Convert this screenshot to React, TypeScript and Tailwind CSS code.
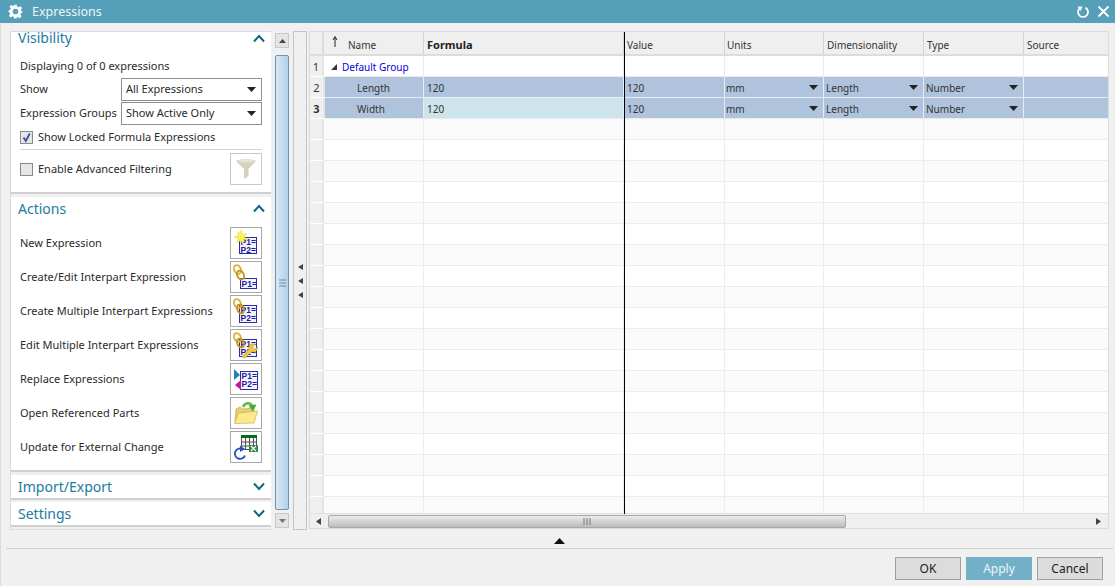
import React from "react";

const font = { fontFamily: '"Noto Sans", "Liberation Sans", sans-serif' };

function Chevron({ up }: { up?: boolean }) {
  return (
    <svg width="12" height="9" viewBox="0 0 12 9" className="shrink-0">
      <path d={up ? "M1 7.5 L6 2 L11 7.5" : "M1 1.5 L6 7 L11 1.5"} fill="none" stroke="#0f6a85" strokeWidth="2" />
    </svg>
  );
}

function Caret() {
  return (
    <svg width="9" height="5" viewBox="0 0 9 5" className="shrink-0">
      <path d="M0 0 H9 L4.5 5 Z" fill="#222" />
    </svg>
  );
}

function Rings() {
  return (
    <g fill="none" strokeWidth="1.9">
      <ellipse cx="6.5" cy="7.5" rx="3.3" ry="4.6" transform="rotate(-25 6.5 7.5)" stroke="#dcb23a" />
      <ellipse cx="9.5" cy="13" rx="3.3" ry="4.6" transform="rotate(-25 9.5 13)" stroke="#c4960f" />
    </g>
  );
}

function PBox({ x, y, w, h, lines }: { x: number; y: number; w: number; h: number; lines: string[] }) {
  return (
    <g>
      <rect x={x + 0.5} y={y + 0.5} width={w - 1} height={h - 1} fill="#f4f4ff" stroke="#2c2ca8" />
      {lines.map((l, i) => (
        <text
          key={l}
          x={x + 1.5}
          y={y + (lines.length === 1 ? h - 2 : 7.5 + i * 8)}
          fontSize="8.5"
          fontWeight="700"
          fill="#1c1c9c"
          fontFamily="Liberation Sans, sans-serif"
        >
          {l}
        </text>
      ))}
    </g>
  );
}

function IconNew() {
  return (
    <svg width="30" height="30" viewBox="0 0 30 30">
      <PBox x={8} y={9} w={18} h={17} lines={["P1=", "P2="]} />
      <path d="M10 2 L11.5 6.5 L16 5 L13 9 L17 11.5 L12.5 11.5 L12 16 L9.5 12.5 L5.5 15 L7.5 10.5 L3 9 L7.5 7.5 L6.5 3.5 L9 6 Z" fill="#fbf25a" stroke="#e6d92c" strokeWidth="0.5" />
    </svg>
  );
}

function IconLink() {
  return (
    <svg width="30" height="30" viewBox="0 0 30 30">
      <PBox x={9} y={16} w={17} h={11} lines={["P1="]} />
      <Rings />
    </svg>
  );
}

function IconLinkMulti() {
  return (
    <svg width="30" height="30" viewBox="0 0 30 30">
      <PBox x={8} y={9} w={18} h={18} lines={["P1=", "P2="]} />
      <Rings />
    </svg>
  );
}

function IconLinkEdit() {
  return (
    <svg width="30" height="30" viewBox="0 0 30 30">
      <PBox x={8} y={9} w={18} h={18} lines={["P1=", "P2="]} />
      <Rings />
      <path d="M11 27 L18 19 C17 15 21 13 24.5 14 L21.5 17 L23.5 19.5 L26.5 17 C27 20.5 24 23 20.5 21.5 L14 28 Z" fill="#f0c840" stroke="#c79a18" strokeWidth="0.6" />
    </svg>
  );
}

function IconReplace() {
  return (
    <svg width="30" height="30" viewBox="0 0 30 30">
      <PBox x={9} y={7} w={18} h={19} lines={["P1=", "P2="]} />
      <path d="M3 5 L9 11 L3 16 Z" fill="#1c84c4" />
      <path d="M10 16 L10 26 L4 21 Z" fill="#c0189c" />
    </svg>
  );
}

function IconFolder() {
  return (
    <svg width="30" height="30" viewBox="0 0 30 30">
      <path d="M5 11 L9 9 L12 11 L23 10 L22 24 L4 25 Z" fill="#e8cf6a" stroke="#b89c40" strokeWidth="0.6" />
      <path d="M3.5 25.5 L7.5 15 L26.5 13 L23 25 Z" fill="#fbe98e" stroke="#c2a648" strokeWidth="0.6" />
      <path d="M12 9 C14 4.5 19 4 21 7.5" fill="none" stroke="#5cb848" strokeWidth="2.6" />
      <path d="M17.5 7.5 L25.5 6.5 L22 13.5 Z" fill="#4aa838" />
    </svg>
  );
}

function IconExcel() {
  return (
    <svg width="30" height="30" viewBox="0 0 30 30">
      <rect x="10.5" y="3.5" width="15" height="14" fill="#f4f4f4" stroke="#555" />
      <rect x="10" y="3" width="16" height="3" fill="#0a6a1c" />
      <path d="M10.5 10H25.5M10.5 14H25.5M14.5 6V18M18.5 6V18M22.5 6V18" stroke="#555" strokeWidth="1" />
      <path d="M18 13 H27 V20 H18 Z" fill="#2e8a3c" />
      <path d="M20 14 L25 19 M25 14 L20 19" stroke="#fff" strokeWidth="1.2" />
      <path d="M14 23.5 A5.2 5.2 0 1 1 9 16.5" fill="none" stroke="#2d50c0" strokeWidth="1.9" />
      <path d="M9 13.5 L14 17 L9 20 Z" fill="#2d50c0" />
    </svg>
  );
}

function Check({ checked }: { checked?: boolean }) {
  return (
    <span className="w-[13px] h-[13px] shrink-0 border border-[#8a8a8a] bg-[#e6e6e6] flex items-center justify-center">
      {checked ? (
        <svg width="11" height="11" viewBox="0 0 11 11">
          <path d="M2.5 5.5 L4.8 9 L8.8 1.5" fill="none" stroke="#3c4fa8" strokeWidth="1.8" />
        </svg>
      ) : null}
    </span>
  );
}

function Select({ value }: { value: string }) {
  return (
    <div className="w-[141px] h-[23px] border border-[#8e8e8e] bg-white flex items-center justify-between pl-[4px] pr-[5px] text-[11px]">
      <span className="pb-[2px]">{value}</span>
      <Caret />
    </div>
  );
}

function SectionHead({ title, up, h = "h-[23px]" }: { title: string; up?: boolean; h?: string }) {
  return (
    <div className={`${h} flex items-center justify-between pl-[7px] pr-[6px] text-[14px] text-[#1b7c9e]`}>
      <span>{title}</span>
      <Chevron up={up} />
    </div>
  );
}

function ActionRow({ label, icon }: { label: string; icon: React.ReactNode }) {
  return (
    <div className="h-[32px] flex items-center justify-between">
      <span className="whitespace-nowrap pb-[2px]">{label}</span>
      <span className="w-[32px] h-[32px] border border-[#a8a8a8] bg-white flex items-center justify-center">{icon}</span>
    </div>
  );
}

const cols = ["w-[100px]", "w-[200px]", "w-[101px]", "w-[99px]", "w-[100px]", "w-[100px]", "w-[100px]", "flex-1"];
const headers = ["Name", "Formula", "Value", "Units", "Dimensionality", "Type", "Source"];

function HeaderRow() {
  return (
    <div className="h-[24px] flex bg-[#efefef] border-b-2 border-[#dcdcdc] shrink-0">
      <div className="w-[14px] shrink-0 border-r-2 border-[#dcdcdc]" />
      {headers.map((h, i) => (
        <div key={h} className={`${cols[i]} ${i === 6 ? "" : "shrink-0 border-r border-[#d4d4d4]"} flex items-center pt-[3px] ${i === 0 ? "" : i === 3 ? "pl-[2px]" : "pl-[3px]"} ${i === 1 ? "font-bold text-[#222] text-[11px]" : ""}`}>
          {i === 0 ? (
            <span className="flex items-center w-full">
              <svg width="24" height="14" viewBox="0 0 24 14" className="mb-[5px] shrink-0">
                <path d="M11 12 V3 M9 5 L11 1.5 L13 5" fill="none" stroke="#222" strokeWidth="1" />
              </svg>
              <span>{h}</span>
            </span>
          ) : (
            h
          )}
        </div>
      ))}
    </div>
  );
}

function DataRow({ n, name, formulaActive }: { n: number; name: string; formulaActive?: boolean }) {
  const cell = "shrink-0 h-full flex items-center justify-between pt-[1px] border-r border-[#e6ecf4]";
  return (
    <div className="h-[21px] flex bg-[#afc3dc] border-b border-[#e6ecf4] shrink-0">
      <div className={`w-[15px] shrink-0 bg-[#efefef] border-r-2 border-[#e4e4e4] flex items-center justify-center text-[11px] shadow-[0_1px_0_#ffffff] ${n === 3 ? "font-bold" : ""}`}>{n}</div>
      <div className={`w-[99px] ${cell} pl-[32px]`}>{name}</div>
      <div className={`w-[200px] ${cell} pl-[3px] ${formulaActive ? "bg-[#cde4ea]" : ""}`}>120</div>
      <div className={`w-[101px] ${cell} pl-[3px]`}>120</div>
      <div className={`w-[99px] ${cell} pl-[1px] pr-[5px]`}>
        <span>mm</span>
        <Caret />
      </div>
      <div className={`w-[100px] ${cell} pl-[2px] pr-[5px]`}>
        <span>Length</span>
        <Caret />
      </div>
      <div className={`w-[100px] ${cell} pl-[2px] pr-[5px]`}>
        <span>Number</span>
        <Caret />
      </div>
      <div className="flex-1" />
    </div>
  );
}

function EmptyRow({ n, children }: { n: number; children?: React.ReactNode }) {
  return (
    <div className={`h-[21px] flex shrink-0 border-b border-[#ececec] ${n % 2 === 0 ? "bg-[#fafafa]" : "bg-white"}`}>
      <div className="w-[14px] shrink-0 bg-[#efefef] border-r-2 border-[#e4e4e4] flex items-center justify-center text-[11px] shadow-[0_1px_0_#ffffff]">{children ? n : ""}</div>
      <div className="w-[100px] shrink-0 border-r border-[#ececec] flex items-center pl-[6px] pt-[1px] whitespace-nowrap">{children}</div>
      <div className="w-[200px] shrink-0 border-r border-[#ececec]" />
      <div className="w-[101px] shrink-0 border-r border-[#ececec]" />
      <div className="w-[99px] shrink-0 border-r border-[#ececec]" />
      <div className="w-[100px] shrink-0 border-r border-[#ececec]" />
      <div className="w-[100px] shrink-0 border-r border-[#ececec]" />
      <div className="flex-1" />
    </div>
  );
}

function Button({ label, primary, ml }: { label: string; primary?: boolean; ml?: string }) {
  return (
    <div
      className={`w-[66px] h-[23px] flex items-center justify-center text-[12px] ${ml ?? ""} ${
        primary ? "bg-[#72b0c8] text-[#eef6fa]" : "bg-[#dcdcdc] border border-[#a0a0a0] text-[#222]"
      }`}
    >
      {label}
    </div>
  );
}

export default function App() {
  const empties = Array.from({ length: 19 }, (_, i) => i + 4);
  return (
    <div style={font} className="w-[1115px] h-[586px] bg-[#f0f0f0] shadow-[inset_1px_0_0_#dcdcdc] flex flex-col overflow-hidden text-[11px] text-[#2a2a2a] leading-none">
      {/* title bar */}
      <div className="h-[23px] shrink-0 bg-[#559fb9] flex items-center pl-[8px] pr-[5px] text-white">
        <svg width="15" height="15" viewBox="0 0 24 24" className="shrink-0">
          <path
            fillRule="evenodd"
            fill="#fff"
            d="M10 1 H14 L14.6 4.3 L16.9 5.3 L19.7 3.4 L22.6 6.3 L20.7 9.1 L21.7 11.4 L23 12 V14 L20.7 14.6 L19.7 16.9 L21.6 19.7 L18.7 22.6 L15.9 20.7 L14 21.5 L14 23 H10 L9.4 20.7 L7.1 19.7 L4.3 21.6 L1.4 18.7 L3.3 15.9 L2.3 13.6 L1 13 V10 L3.3 9.4 L4.3 7.1 L2.4 4.3 L5.3 1.4 L8.1 3.3 L9.4 2.3 Z M12 7.5 A4.5 4.5 0 1 0 12 16.5 A4.5 4.5 0 1 0 12 7.5 Z"
          />
        </svg>
        <span className="ml-[9px] pt-[2px] text-[12.5px] text-[#eef6fa]">Expressions</span>
        <span className="ml-auto flex items-center gap-[7px]">
          <svg width="14" height="14" viewBox="0 0 14 14">
            <path d="M4 3 A5 5 0 1 0 9.5 2.6" fill="none" stroke="#fff" strokeWidth="1.8" />
            <path d="M1.5 1.5 L6.5 1.5 L4.5 6 Z" fill="#fff" />
          </svg>
          <svg width="13" height="13" viewBox="0 0 13 13">
            <path d="M1.5 1.5 L11.5 11.5 M11.5 1.5 L1.5 11.5" stroke="#fff" strokeWidth="1.9" />
          </svg>
        </span>
      </div>

      {/* main */}
      <div className="h-[507px] shrink-0 flex pt-[8px] pl-[10px]">
        {/* left column */}
        <div className="w-[261px] h-[499px] shrink-0 border border-[#dcdcdc] border-r-0 flex flex-col">
          <section className="h-[162px] shrink-0 bg-white border-b-2 border-[#cfcfcf] flex flex-col">
            <SectionHead title="Visibility" up h="h-[12px]" />
            <div className="px-[9px] flex flex-col">
              <div className="mt-[14px] h-[14px] flex items-center whitespace-nowrap">Displaying 0 of 0 expressions</div>
              <div className="flex items-center justify-between mt-[6px]">
                <span className="pb-[2px]">Show</span>
                <Select value="All Expressions" />
              </div>
              <div className="flex items-center justify-between mt-[1px]">
                <span className="whitespace-nowrap pb-[2px]">Expression Groups</span>
                <Select value="Show Active Only" />
              </div>
              <label className="flex items-center gap-[5px] mt-[6px]">
                <Check checked />
                <span className="whitespace-nowrap pb-[2px]">Show Locked Formula Expressions</span>
              </label>
              <div className="border-t border-[#d4d4d4] mt-[5px]" />
              <div className="flex items-center justify-between mt-[3px]">
                <label className="flex items-center gap-[5px]">
                  <Check />
                  <span className="whitespace-nowrap pb-[2px]">Enable Advanced Filtering</span>
                </label>
                <span className="w-[32px] h-[32px] border border-[#c8c8c8] bg-white flex items-center justify-center">
                  <svg width="22" height="24" viewBox="0 0 22 24">
                    <path d="M1 4 C4 1.5 18 1.5 21 4 L13.5 12 V19 L9 22 V12 Z" fill="#d6d0bf" />
                    <ellipse cx="11" cy="4" rx="8" ry="1.4" fill="#e6e2d6" />
                  </svg>
                </span>
              </div>
            </div>
          </section>
          <section className="h-[275px] mt-[3px] shrink-0 bg-white border-b-2 border-[#cfcfcf] flex flex-col">
            <SectionHead title="Actions" up />
            <div className="px-[9px] mt-[7px] flex flex-col gap-[2px]">
              <ActionRow label="New Expression" icon={<IconNew />} />
              <ActionRow label="Create/Edit Interpart Expression" icon={<IconLink />} />
              <ActionRow label="Create Multiple Interpart Expressions" icon={<IconLinkMulti />} />
              <ActionRow label="Edit Multiple Interpart Expressions" icon={<IconLinkEdit />} />
              <ActionRow label="Replace Expressions" icon={<IconReplace />} />
              <ActionRow label="Open Referenced Parts" icon={<IconFolder />} />
              <ActionRow label="Update for External Change" icon={<IconExcel />} />
            </div>
          </section>
          <section className="h-[25px] mt-[3px] shrink-0 bg-white border-b-2 border-[#cfcfcf]">
            <SectionHead title="Import/Export" />
          </section>
          <section className="h-[25px] mt-[2px] shrink-0 bg-white border-b-2 border-[#cfcfcf]">
            <SectionHead title="Settings" />
          </section>
        </div>

        {/* vertical scrollbar */}
        <div className="w-[14px] ml-[4px] h-[496px] mt-[2px] shrink-0 flex flex-col">
          <div className="h-[15px] shrink-0 bg-[#e4e4e4] border border-[#c8c8c8] flex items-center justify-center">
            <svg width="7" height="4" viewBox="0 0 7 4">
              <path d="M0 4 L3.5 0 L7 4 Z" fill="#444" />
            </svg>
          </div>
          <div className="mt-[7px] h-[455px] shrink-0 rounded-[2px] border border-[#6f93b3] bg-gradient-to-r from-[#d8e8f5] to-[#b2d1e8] flex items-center justify-center">
            <svg width="9" height="8" viewBox="0 0 9 8">
              <path d="M1 1 H8 M1 4 H8 M1 7 H8" stroke="#6f8ca6" strokeWidth="1" />
            </svg>
          </div>
          <div className="mt-[3px] h-[15px] shrink-0 bg-[#e4e4e4] border border-[#c8c8c8] flex items-center justify-center">
            <svg width="7" height="4" viewBox="0 0 7 4">
              <path d="M0 0 L3.5 4 L7 0 Z" fill="#777" />
            </svg>
          </div>
        </div>

        {/* splitter */}
        <div className="w-[14px] ml-[4px] h-[499px] shrink-0 border border-[#c4c4c4] flex flex-col items-center justify-center gap-[8px] pt-[1px] pb-[1px]">
          {[0, 1, 2].map((k) => (
            <svg key={k} width="5" height="6" viewBox="0 0 5 6">
              <path d="M5 0 V6 L0 3 Z" fill="#444" />
            </svg>
          ))}
        </div>

        {/* table */}
        <div className="relative w-[800px] h-[498px] ml-[2px] shrink-0 border border-[#dcdcdc] flex flex-col overflow-hidden text-[10px] text-[#333]">
          <HeaderRow />
          <EmptyRow n={1}>
            <svg width="8" height="8" viewBox="0 0 8 8" className="mr-[4px] shrink-0">
              <path d="M7 1 V7 H1 Z" fill="#333" />
            </svg>
            <span className="text-[#0000e0]">Default Group</span>
          </EmptyRow>
          <DataRow n={2} name="Length" />
          <DataRow n={3} name="Width" formulaActive />
          <div className="flex-1 min-h-0 overflow-hidden flex flex-col">
            {empties.map((n) => (
              <EmptyRow key={n} n={n} />
            ))}
          </div>
          {/* horizontal scrollbar */}
          <div className="h-[15px] shrink-0 bg-[#efefef] flex items-center border-t border-[#e0e0e0]">
            <div className="w-[18px] flex justify-end pr-[7px] shrink-0">
              <svg width="5" height="7" viewBox="0 0 5 7">
                <path d="M5 0 V7 L0 3.5 Z" fill="#444" />
              </svg>
            </div>
            <div className="w-[518px] h-[13px] shrink-0 border border-[#a8a8a8] rounded-[2px] bg-gradient-to-b from-[#ececec] to-[#bcbcbc] flex items-center justify-center">
              <svg width="8" height="7" viewBox="0 0 8 7">
                <path d="M1 0 V7 M4 0 V7 M7 0 V7" stroke="#777" strokeWidth="1" />
              </svg>
            </div>
            <div className="ml-auto pr-[7px]">
              <svg width="5" height="7" viewBox="0 0 5 7">
                <path d="M0 0 V7 L5 3.5 Z" fill="#444" />
              </svg>
            </div>
          </div>
          <div className="absolute left-[314px] top-0 w-[1px] h-[482px] bg-black" />
        </div>
      </div>

      {/* collapse caret */}
      <div className="h-[18px] shrink-0 flex items-center justify-center pt-[4px] pl-[4px]">
        <svg width="11" height="6" viewBox="0 0 11 6">
          <path d="M0 6 L5.5 0 L11 6 Z" fill="#111" />
        </svg>
      </div>

      {/* footer */}
      <div className="h-[38px] shrink-0 ml-[6px] mr-[2px] border-t border-[#d2d2d2] flex justify-end items-start pt-[8px] pr-[10px]">
        <Button label="OK" />
        <Button label="Apply" primary ml="ml-[5px]" />
        <Button label="Cancel" ml="ml-[5px]" />
      </div>
    </div>
  );
}
